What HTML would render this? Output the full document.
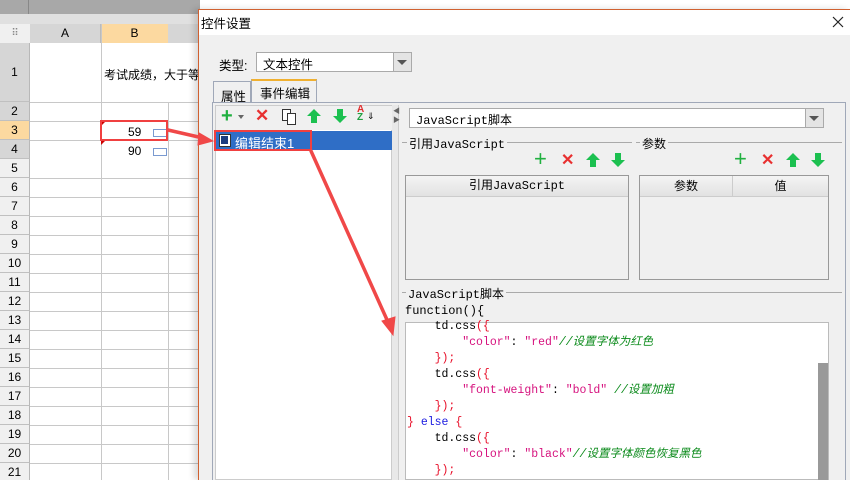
<!DOCTYPE html><html style="width:850px;height:480px;overflow:hidden"><head><meta charset="utf-8"><style>
*{margin:0;padding:0;box-sizing:border-box}
body{width:850px;height:480px;overflow:hidden;position:relative;background:#fff;font-family:"Liberation Sans","Noto Sans CJK SC",sans-serif;font-size:12px;color:#000}
.a{position:absolute}
.rh{position:absolute;left:0;width:30px;background:#f0f0f0;border-bottom:1px solid #c0c0c0;border-right:1px solid #b8b8b8;text-align:center;font-size:12px}
.hl{position:absolute;left:30px;width:168px;height:1px;background:#c8c8c8}
.vl{position:absolute;top:24px;width:1px;height:456px;background:#c8c8c8}
.mono{font-family:"Liberation Mono","Noto Sans CJK SC",monospace}
.code{font-family:"Liberation Mono","Noto Sans CJK SC",monospace;font-size:11.5px;line-height:16px;white-space:pre;position:absolute;left:407px;top:319px}
.s{color:#d6127e}.r{color:#e8102a}.c{color:#0a8a1a;font-style:italic}.k{color:#1a1ae0}
</style></head><body>
<div class="a" style="left:0;top:0;width:200px;height:14px;background:#a8a8a8"></div>
<div class="a" style="left:28px;top:0;width:1px;height:14px;background:#888"></div>
<div class="a" style="left:0;top:14px;width:200px;height:10px;background:#e0e0e0"></div>
<div class="a" style="left:0;top:24px;width:30px;height:19px;background:#f0f0f0;color:#888;text-align:center;line-height:19px;font-size:10px">⠿</div>
<div class="a" style="left:30px;top:24px;width:71px;height:19px;background:#d6d6d6;text-align:center;line-height:19px;border-right:1px solid #bbb">A</div>
<div class="a" style="left:101px;top:24px;width:67px;height:19px;background:#fcd9a0;text-align:center;line-height:19px">B</div>
<div class="a" style="left:168px;top:24px;width:32px;height:19px;background:#d6d6d6"></div>
<div class="vl" style="left:101px"></div><div class="vl" style="left:168px;top:102px;height:378px"></div>
<div class="rh" style="top:43px;height:59px;line-height:59px;background:#d6d6d6">1</div>
<div class="a" style="left:104px;top:66px;font-size:12px">考试成绩，大于等</div>
<div class="hl" style="top:102px"></div>
<div class="rh" style="top:102px;height:19px;line-height:19px;background:#d6d6d6">2</div>
<div class="rh" style="top:121px;height:19px;line-height:19px;background:#fcd9a0">3</div>
<div class="rh" style="top:140px;height:19px;line-height:19px;background:#d6d6d6">4</div>
<div class="hl" style="top:121px"></div><div class="hl" style="top:140px"></div>
<div class="a" style="left:128px;top:125px">59</div><div class="a" style="left:128px;top:144px">90</div>
<div class="a" style="left:153px;top:129px;width:14px;height:8px;border:1px solid #7a9ad0"></div>
<div class="a" style="left:153px;top:148px;width:14px;height:8px;border:1px solid #7a9ad0"></div>
<div class="a" style="left:101px;top:121px;width:0;height:0;border-top:5px solid #c00;border-right:5px solid transparent"></div>
<div class="a" style="left:101px;top:140px;width:0;height:0;border-top:5px solid #c00;border-right:5px solid transparent"></div>
<div class="a" style="left:100px;top:120px;width:68px;height:21px;border:2px solid #f04040"></div>
<div id="rows"></div>
<script>
var h='';for(var i=5;i<=21;i++){var t=159+(i-5)*19;h+='<div class="rh" style="top:'+t+'px;height:19px;line-height:19px">'+i+'</div>'+(i<21?'<div class="hl" style="top:'+(t+19)+'px"></div>':'');}
document.getElementById('rows').innerHTML=h;
</script>
<div class="a" style="left:198px;top:9px;width:652px;height:471px;background:#f0f0f0;border-top:1px solid #d06030;border-left:1px solid #d06030;box-shadow:-4px 0 6px rgba(0,0,0,.15)"></div>
<div class="a" style="left:199px;top:10px;width:651px;height:25px;background:#fff"></div>
<div class="a" style="left:201px;top:13px;font-size:12.5px">控件设置</div>
<svg class="a" style="left:832px;top:16px" width="12" height="12"><path d="M1 1L11 11M11 1L1 11" stroke="#222" stroke-width="1.2"/></svg>
<div class="a" style="left:219px;top:55px;font-size:12.5px">类型:</div>
<div class="a" style="left:256px;top:52px;width:156px;height:20px;background:#fff;border:1px solid #aaa"></div>
<div class="a" style="left:263px;top:54px;font-size:12.5px">文本控件</div>
<div class="a" style="left:393px;top:53px;width:18px;height:18px;background:#e4e4e4;border-left:1px solid #aaa"></div>
<div class="a" style="left:397px;top:60px;border-top:5px solid #555;border-left:5px solid transparent;border-right:5px solid transparent"></div>
<div class="a" style="left:213px;top:81px;width:38px;height:21px;border:1px solid #a0a8b8;border-bottom:none;background:#f0f0f0;font-size:12.5px;padding:4px 0 0 7px">属性</div>
<div class="a" style="left:251px;top:79px;width:66px;height:23px;border:1px solid #a0a8b8;border-top:2px solid #f0b030;border-bottom:none;background:#f0f0f0;font-size:12.5px;padding:2px 0 0 8px">事件编辑</div>
<div class="a" style="left:212px;top:102px;width:634px;height:378px;border:1px solid #a0a8b8;border-bottom:none"></div>
<div class="a" style="left:215px;top:105px;width:177px;height:375px;background:#fff;border:1px solid #ccc"></div>
<div class="a" style="left:216px;top:106px;width:176px;height:24px;background:#f0f0f0"></div>
<div class="a" style="left:221px;top:105px;color:#20b040;font-size:20px;font-weight:bold">+</div>
<div class="a" style="left:238px;top:115px;border-top:4px solid #666;border-left:3px solid transparent;border-right:3px solid transparent"></div>
<div class="a" style="left:255px;top:106px;color:#e83030;font-size:17px;font-weight:bold">✕</div>
<div class="a" style="left:282px;top:109px;width:9px;height:12px;border:1px solid #333;background:#fff"></div>
<div class="a" style="left:287px;top:113px;width:9px;height:12px;border:1px solid #333;background:#fff"></div>
<svg class="a" style="left:306px;top:108px" width="16" height="16"><path d="M8 1L15 8H11V15H5V8H1Z" fill="#1cc050"/></svg>
<svg class="a" style="left:332px;top:108px" width="16" height="16"><path d="M8 15L15 8H11V1H5V8H1Z" fill="#1cc050"/></svg>
<div class="a" style="left:357px;top:106px;font-size:10px;font-weight:bold;color:#e03030;line-height:8px">A<br><span style="color:#20a040">Z</span></div>
<div class="a" style="left:367px;top:111px;font-size:9px">⇓</div>
<div class="a" style="left:216px;top:131px;width:176px;height:19px;background:#2f6ec6"></div>
<div class="a" style="left:219px;top:134px;width:12px;height:13px;background:#fff;border:1px solid #333"></div>
<div class="a" style="left:221px;top:136px;width:7px;height:8px;background:#1c3c80"></div>
<div class="a" style="left:235px;top:133px;color:#fff;font-size:13px">编辑结束1</div>
<div class="a" style="left:214px;top:130px;width:98px;height:21px;border:2px solid #f04040"></div>
<div class="a" style="left:392px;top:105px;width:7px;height:375px;background:#e8e8e8;border-right:1px solid #ccc"></div>
<div class="a" style="left:393px;top:107px;font-size:7px;color:#666;line-height:9px">◀<br>▶</div>
<div class="a" style="left:409px;top:108px;width:415px;height:20px;background:#fff;border:1px solid #aaa"></div>
<div class="a mono" style="left:416px;top:111px;font-size:12px">JavaScript脚本</div>
<div class="a" style="left:805px;top:109px;width:18px;height:18px;background:#e4e4e4;border-left:1px solid #aaa"></div>
<div class="a" style="left:809px;top:116px;border-top:5px solid #555;border-left:5px solid transparent;border-right:5px solid transparent"></div>
<div class="a" style="left:402px;top:142px;width:230px;height:1px;background:#aaa"></div>
<div class="a mono" style="left:407px;top:135px;background:#f0f0f0;padding:0 2px;font-size:12px">引用JavaScript</div>
<div class="a" style="left:636px;top:142px;width:206px;height:1px;background:#aaa"></div>
<div class="a" style="left:640px;top:135px;background:#f0f0f0;padding:0 2px;font-size:12px">参数</div>
<div id="ic"></div>
<script>
function ic(x){return '<div class="a" style="left:'+x+'px;top:146px;color:#20b040;font-size:22px">+</div><div class="a" style="left:'+(x+27)+'px;top:150px;color:#e83030;font-size:16px;font-weight:bold">✕</div><svg class="a" style="left:'+(x+51)+'px;top:152px" width="16" height="16"><path d="M8 1L15 8H11V15H5V8H1Z" fill="#1cc050"/></svg><svg class="a" style="left:'+(x+76)+'px;top:152px" width="16" height="16"><path d="M8 15L15 8H11V1H5V8H1Z" fill="#1cc050"/></svg>';}
document.getElementById('ic').innerHTML=ic(534)+ic(734);
</script>
<div class="a" style="left:405px;top:175px;width:224px;height:105px;border:1px solid #999"></div>
<div class="a mono" style="left:406px;top:176px;width:222px;height:21px;background:linear-gradient(#f4f4f4,#e2e2e2);border-bottom:1px solid #ccc;text-align:center;line-height:21px;font-size:12px">引用JavaScript</div>
<div class="a" style="left:639px;top:175px;width:190px;height:105px;border:1px solid #999"></div>
<div class="a" style="left:640px;top:176px;width:188px;height:21px;background:linear-gradient(#f4f4f4,#e2e2e2);border-bottom:1px solid #ccc;line-height:21px;font-size:12px"><span style="position:absolute;left:0;width:93px;text-align:center;border-right:1px solid #ccc">参数</span><span style="position:absolute;left:93px;width:95px;text-align:center">值</span></div>
<div class="a" style="left:402px;top:292px;width:440px;height:1px;background:#aaa"></div>
<div class="a mono" style="left:406px;top:285px;background:#f0f0f0;padding:0 2px;font-size:12px">JavaScript脚本</div>
<div class="a mono" style="left:405px;top:304px;font-size:12px">function(){</div>
<div class="a" style="left:405px;top:322px;width:424px;height:158px;background:#fff;border:1px solid #bbb"></div>
<div class="a" style="left:818px;top:363px;width:10px;height:117px;background:#999"></div>
<div class="code">    td.css<span class="r">({</span>
        <span class="s">"color"</span>: <span class="s">"red"</span><span class="c">//设置字体为红色</span>
    <span class="r">});</span>
    td.css<span class="r">({</span>
        <span class="s">"font-weight"</span>: <span class="s">"bold"</span> <span class="c">//设置加粗</span>
    <span class="r">});</span>
<span class="r">}</span> <span class="k">else</span> <span class="r">{</span>
    td.css<span class="r">({</span>
        <span class="s">"color"</span>: <span class="s">"black"</span><span class="c">//设置字体颜色恢复黑色</span>
    <span class="r">});</span></div>
<svg class="a" style="left:0;top:0" width="850" height="480">
<g stroke="#f04848" stroke-width="3.5" fill="#f04848" stroke-linecap="round">
<line x1="168" y1="130" x2="203" y2="138"/>
<path d="M213 141L199 133L198 145Z" stroke-width="1"/>
<line x1="311" y1="151" x2="388" y2="322"/>
<path d="M393 335L382 321L395 317Z" stroke-width="1"/>
</g></svg>
</body></html>
